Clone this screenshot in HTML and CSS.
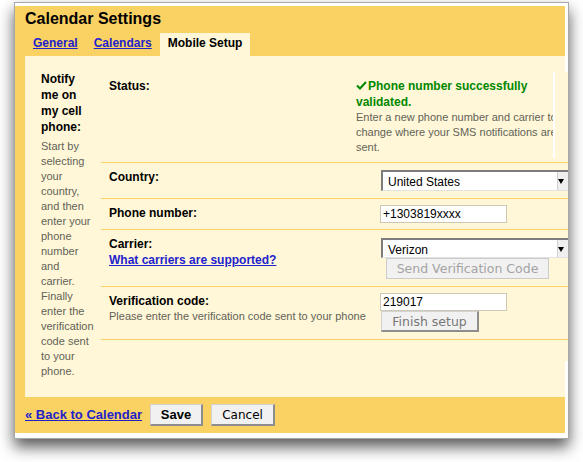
FILE: index.html
```html
<!DOCTYPE html>
<html lang="en">
<head>
    <meta charset="UTF-8">
    <meta name="viewport" content="width=device-width, initial-scale=1.0">
    <title>Calendar Settings</title>
    <link rel="stylesheet" href="styles.css">
</head>
<body>
    <div class="window">
        <div class="settings">
            <h1 class="title">Calendar Settings</h1>
            <ul class="tabs">
                <li class="tab"><a href="#">General</a></li>
                <li class="tab"><a href="#">Calendars</a></li>
                <li class="tab active">Mobile Setup</li>
            </ul>
            <div class="panel">
                <div class="side">
                    <div class="side-title">Notify me on my cell phone:</div>
                    <div class="side-text">Start by selecting your country, and then enter your phone number and carrier. Finally enter the verification code sent to your phone.</div>
                </div>
                <div class="form">
                    <div class="row row-status">
                        <div class="label">Status:</div>
                        <div class="status">
                            <div class="status-inner">
                                <div class="ok"><svg class="check" width="11" height="9" viewBox="0 0 11 9"><path d="M1 4.5 L4 7.5 L10 1" fill="none" stroke="#080" stroke-width="2"/></svg>Phone number successfully validated.</div>
                                <div class="hint">Enter a new phone number and carrier to change where your SMS notifications are sent.</div>
                            </div>
                        </div>
                    </div>
                    <div class="row">
                        <div class="label">Country:</div>
                        <div class="field">
                            <div class="select">
                                <select><option>United States</option></select>
                            </div>
                        </div>
                    </div>
                    <div class="row row-phone">
                        <div class="label">Phone number:</div>
                        <div class="field">
                            <input class="text" type="text" value="+1303819xxxx">
                        </div>
                    </div>
                    <div class="row">
                        <div class="label">
                            Carrier:<br>
                            <a href="#">What carriers are supported?</a>
                        </div>
                        <div class="field">
                            <div class="select select-carrier">
                                <select><option>Verizon</option></select>
                            </div>
                            <button class="btn btn-send" disabled>Send Verification Code</button>
                        </div>
                    </div>
                    <div class="row">
                        <div class="label">
                            Verification code:
                            <div class="help">Please enter the verification code sent to your phone</div>
                        </div>
                        <div class="field">
                            <input class="text" type="text" value="219017">
                            <button class="btn btn-finish">Finish setup</button>
                        </div>
                    </div>
                </div>
            </div>
            <div class="actions">
                <a href="#" class="back">&laquo; Back to Calendar</a>
                <button class="btn btn-save">Save</button>
                <button class="btn btn-cancel">Cancel</button>
            </div>
        </div>
    </div>
</body>
</html>
```

FILE: styles.css
```css
html, body {
    height: 100%;
}

body {
    margin: 0;
    min-height: 462px;
    background: #fff;
    font-family: "Liberation Sans", Arial, sans-serif;
    color: #000;
}

a {
    color: #22c;
}

.window {
    width: 555px;
    height: 437px;
    margin: 0 0 0 14px;
    position: relative;
    top: 2px;
    box-sizing: border-box;
    border: 1px solid #a8a8a8;
    padding: 3px 3px 5px 0;
    background: #fff;
    box-shadow: 0 8px 14px rgba(0, 0, 0, .65);
    overflow: hidden;
}

.settings {
    height: 100%;
    background: #fad163;
    padding-top: 4px;
    box-sizing: border-box;
}

.title {
    margin: 0 0 5px 10px;
    font-size: 16px;
    line-height: 18px;
    font-weight: bold;
}

.tabs {
    list-style: none;
    margin: 0 0 0 10px;
    padding: 0;
    display: flex;
}

.tab {
    padding: 2px 8px 5px;
    font-size: 12px;
    line-height: 16px;
    font-weight: bold;
}

.tab.active {
    background: #fff7d7;
}

.panel {
    height: 341px;
    box-sizing: border-box;
    margin-left: 10px;
    padding: 15px 0 0 16px;
    background: #fff7d7;
    display: flex;
    align-items: flex-start;
}

.side {
    flex: none;
    width: 53.5px;
    margin-right: 6.5px;
}

.side-title {
    font-size: 12px;
    line-height: 16px;
    font-weight: bold;
}

.side-text {
    margin-top: 4px;
    font-size: 11px;
    line-height: 15px;
    color: #626258;
}

.form {
    flex: none;
    width: 480px;
    margin-top: 1px;
    padding-bottom: 21px;
    background: #fff7d7;
}

.row {
    display: flex;
    padding: 6px 0 7px;
    border-bottom: 1px solid #fad163;
}

.row-status {
    padding: 0 0 4px;
}

.row-status .label {
    padding-top: 6px;
}

.row-phone {
    padding-bottom: 6px;
}

.label {
    flex: none;
    width: 255px;
    box-sizing: border-box;
    padding-left: 8px;
    font-size: 12px;
    line-height: 16px;
    font-weight: bold;
}

.help {
    font-size: 11px;
    line-height: 15px;
    font-weight: normal;
    color: #626258;
    white-space: nowrap;
}

.status {
    width: 197px;
    padding: 6px 0 3px;
    border-right: 2px solid #fff;
    overflow: hidden;
}

.status-inner {
    width: 215px;
}

.ok {
    color: #080;
    font-size: 12px;
    line-height: 16px;
    font-weight: bold;
}

.check {
    margin-right: 1px;
}

.hint {
    font-size: 11px;
    line-height: 15px;
    color: #626258;
}

.field {
    margin-left: 24px;
}

.select {
    position: relative;
    width: 190px;
    height: 21px;
    margin: 1px 0 0 1px;
    box-sizing: border-box;
    border-top: 2px solid #7c7c7c;
    border-left: 2px solid #7c7c7c;
    border-bottom: 1px solid #e2e2e2;
    background: #fff;
}

.select-carrier {
    height: 20px;
    margin-top: 2px;
}

.select select {
    appearance: none;
    -webkit-appearance: none;
    border: 0;
    outline: 0;
    background: transparent;
    width: 100%;
    height: 100%;
    padding: 0 0 2px 5px;
    font-family: "Liberation Sans", Arial, sans-serif;
    font-size: 12px;
    color: #000;
}

.select::before {
    content: "";
    position: absolute;
    right: 0;
    top: 0;
    bottom: 0;
    width: 13px;
    background: #efefef;
    border-left: 1px solid #d0d0d0;
}

.select::after {
    content: "";
    position: absolute;
    right: 7px;
    top: 7px;
    border-top: 5px solid #000;
    border-left: 3.5px solid transparent;
    border-right: 3.5px solid transparent;
}

.text {
    display: block;
    width: 127px;
    height: 18px;
    box-sizing: border-box;
    margin: 0;
    padding: 0 2px;
    border: 1px solid #cdc8b4;
    background: #fff;
    font-family: "Liberation Sans", Arial, sans-serif;
    font-size: 12px;
    color: #000;
}

.btn {
    display: block;
    height: 21px;
    box-sizing: border-box;
    margin: 0;
    padding: 0;
    border: 1px solid #d2d2d2;
    border-right: 2px solid #8e8e8e;
    border-bottom: 2px solid #8e8e8e;
    background: #f1f1f1;
    font-family: "DejaVu Sans", sans-serif;
    font-size: 12.5px;
    color: #000;
}

.btn-send {
    width: 163px;
    margin-left: 6px;
    border: 1px solid #cbcbcb;
    color: #a3a3a3;
}

.btn-finish {
    width: 98px;
    margin-left: 1px;
    color: #777;
}

.actions {
    display: flex;
    align-items: center;
    gap: 8px;
    padding: 7px 0 7px 10px;
}

.back {
    font-size: 13px;
    line-height: 16px;
    font-weight: bold;
}

.btn-save {
    width: 53px;
    height: 22px;
    font-family: "Liberation Sans", Arial, sans-serif;
    font-size: 13px;
    font-weight: bold;
}

.btn-cancel {
    width: 64px;
    height: 22px;
    font-size: 12px;
}
```
